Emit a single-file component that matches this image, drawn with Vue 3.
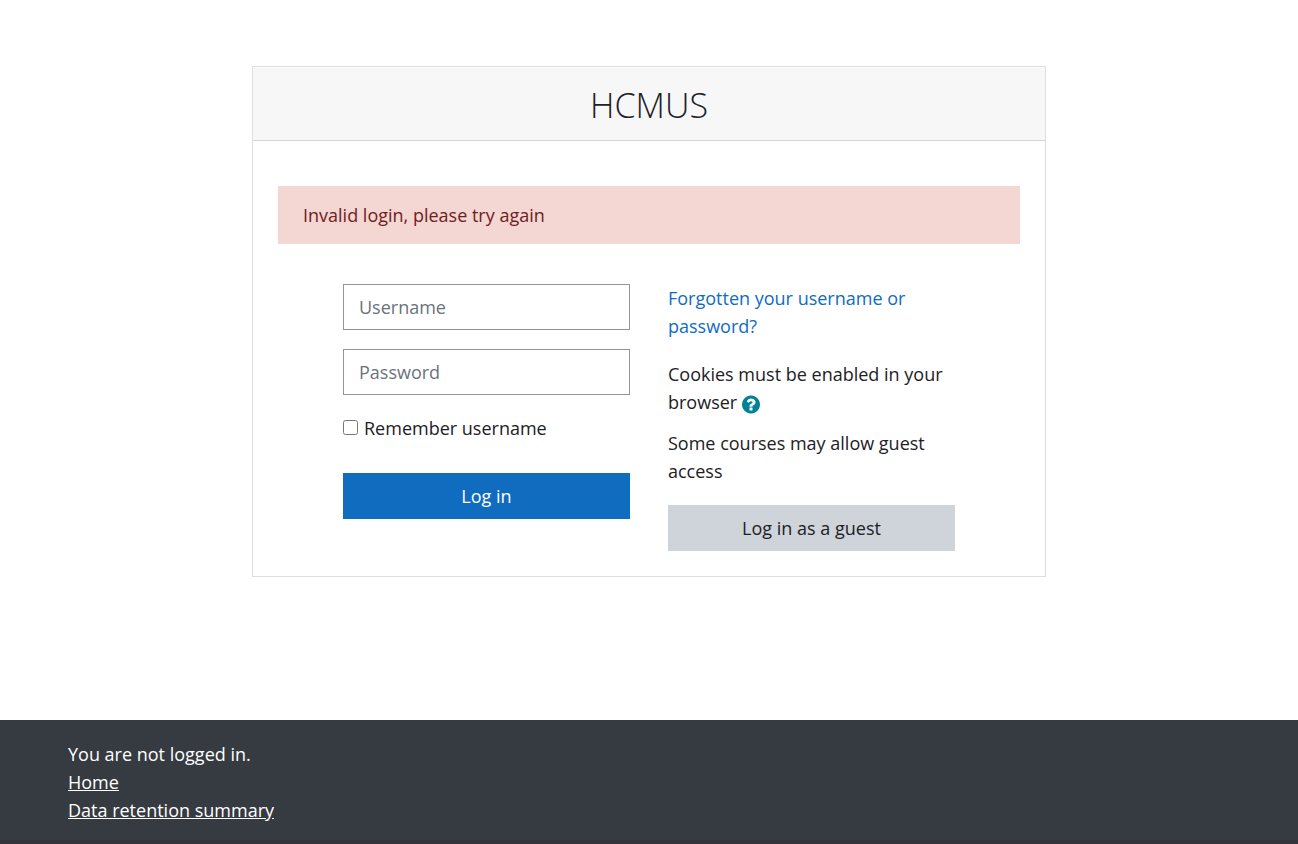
<script setup>
import { ref } from 'vue'

const username = ref('')
const password = ref('')
const remember = ref(false)
</script>

<template>
  <div class="page">
    <main class="content">
      <section class="card">
        <header class="card-header">
          <h1>HCMUS</h1>
        </header>
        <div class="card-body">
          <div class="alert" role="alert">Invalid login, please try again</div>
          <div class="columns">
            <form class="login" @submit.prevent>
              <input v-model="username" class="field" type="text" placeholder="Username" aria-label="Username" />
              <input v-model="password" class="field" type="password" placeholder="Password" aria-label="Password" />
              <div class="remember">
                <input id="remember" v-model="remember" type="checkbox" />
                <label for="remember">Remember username</label>
              </div>
              <button class="btn primary" type="submit">Log in</button>
            </form>
            <div class="help">
              <p class="forgot"><a href="#">Forgotten your username or password?</a></p>
              <p class="cookies">
                Cookies must be enabled in your browser
                <button class="help-btn" type="button" aria-label="Help with cookies">
                  <svg viewBox="0 0 1536 1792" aria-hidden="true">
                    <path d="M896 1376v-192q0-14-9-23t-23-9h-192q-14 0-23 9t-9 23v192q0 14 9 23t23 9h192q14 0 23-9t9-23zm256-672q0-88-55.500-163t-138.500-116-170-41q-243 0-371 213-15 24 8 42l132 100q7 6 19 6 16 0 25-12 53-68 86-92 34-24 86-24 48 0 85.500 26t37.500 59q0 38-20 61t-68 45q-63 28-115.500 86.500t-52.500 125.500v36q0 14 9 23t23 9h192q14 0 23-9t9-23q0-19 21.500-49.500t54.500-49.500q32-18 49-28.500t46-35 44.500-48 28-60.500 12.500-81zm384 192q0 209-103 385.500t-279.500 279.500-385.500 103-385.500-103-279.500-279.500-103-385.500 103-385.500 279.500-279.500 385.500-103 385.500 103 279.500 279.500 103 385.500z" />
                  </svg>
                </button>
              </p>
              <p class="guest">Some courses may allow guest access</p>
              <button class="btn secondary" type="button">Log in as a guest</button>
            </div>
          </div>
        </div>
      </section>
    </main>
    <footer class="footer">
      <div>You are not logged in.</div>
      <div><a href="#">Home</a></div>
      <div><a href="#">Data retention summary</a></div>
    </footer>
  </div>
</template>

<style>
body {
  margin: 0;
  background: #fff;
}
</style>

<style scoped>
.page,
.page * {
  box-sizing: border-box;
}
.page {
  display: flex;
  flex-direction: column;
  min-height: 100vh;
  color: #1d2125;
  font-family: "Segoe UI", "Open Sans", "Noto Sans", sans-serif;
  font-size: 18px;
  line-height: 28px;
}
.content {
  flex: 1;
  padding: 66px 24px;
}
.card {
  max-width: 794px;
  margin: 0 auto;
  border: 1px solid #dedede;
}
.card-header {
  padding: 16px 24px 14px;
  background: #f7f7f7;
  border-top: 1px solid #fff;
  border-bottom: 1px solid #d5d5d5;
  text-align: center;
}
h1 {
  margin: 0;
  font-size: 34px;
  font-weight: 300;
  line-height: 42px;
}
.card-body {
  padding: 45px 25px 25px;
}
.alert {
  padding: 15px 25px;
  background: #f4d6d2;
  color: #6e211e;
}
.columns {
  display: grid;
  grid-template-columns: 1fr 1fr;
  gap: 38px;
  max-width: 612px;
  margin: 40px auto 0;
}
.login {
  display: flex;
  flex-direction: column;
}
.field {
  width: 100%;
  height: 46px;
  margin: 0 0 19px;
  padding: 0 15px;
  border: 1px solid #8f959e;
  border-radius: 0;
  background: #fff;
  color: #495057;
  font: inherit;
}
.field::placeholder {
  color: #6a737b;
  opacity: 1;
}
.remember {
  display: flex;
  align-items: flex-start;
  gap: 6px;
  margin-bottom: 31px;
}
.remember input {
  width: 15px;
  height: 15px;
  margin: 6px 0 0;
}
.btn {
  display: block;
  width: 100%;
  height: 46px;
  padding: 0 16px;
  border: 0;
  font: inherit;
  cursor: pointer;
}
.primary {
  background: #0f6cbf;
  color: #fff;
}
.secondary {
  background: #ced4da;
  color: #1d2125;
}
p {
  margin: 0;
}
.forgot {
  margin-bottom: 20px;
}
.forgot a {
  color: #0f6cbf;
  text-decoration: none;
}
.cookies {
  margin-bottom: 13px;
}
.guest {
  margin-bottom: 20px;
}
.help-btn {
  margin: 0;
  padding: 0;
  border: 0;
  background: none;
  line-height: 0;
  vertical-align: middle;
  cursor: pointer;
}
.help-btn svg {
  display: block;
  width: 18px;
  height: 21px;
  fill: #008196;
}
.footer {
  padding: 20px 68px 16px;
  border-bottom: 4px solid #33343c;
  background: #363a41;
  color: #fff;
}
.footer a {
  color: #fff;
  text-decoration: underline;
}
</style>
